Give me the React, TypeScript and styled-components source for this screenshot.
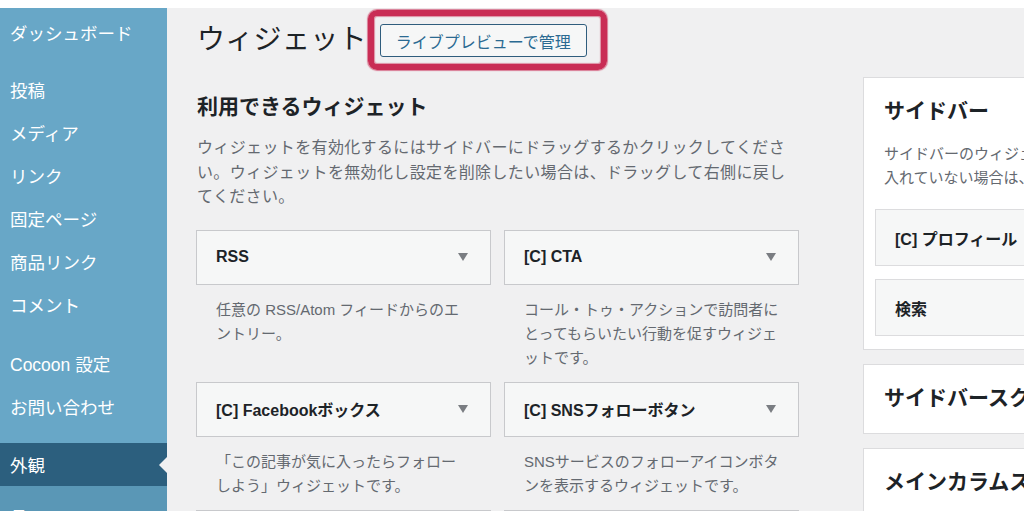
import styled, { createGlobalStyle } from "styled-components";

const GlobalStyle = createGlobalStyle`
  body {
    margin: 0;
    background: #ffffff;
    font-family: "Liberation Sans", "Noto Sans CJK JP", sans-serif;
  }
`;

const Page = styled.div`
  display: flex;
  margin-top: 8px;
  height: 503px;
  overflow: hidden;
`;

const AdminMenu = styled.nav`
  width: 167px;
  flex-shrink: 0;
  background: #68a7c7;
  padding-top: 3px;
  display: flex;
  flex-direction: column;
`;

const MenuItem = styled.div<{ gapBefore?: number; active?: boolean }>`
  position: relative;
  flex-shrink: 0;
  height: 43px;
  margin-top: ${props => props.gapBefore || 0}px;
  padding-left: 10px;
  display: flex;
  align-items: center;
  color: #ffffff;
  font-size: 17.5px;
  background: ${props => props.active ? "#2c5f7e" : "transparent"};

  ${props => props.active && `
    &::after {
      content: "";
      position: absolute;
      right: 0;
      top: 50%;
      margin-top: -8px;
      border: 8px solid transparent;
      border-right-color: #f0f0f1;
    }
  `}
`;

const SubMenu = styled.div`
  flex: 1;
  background: #5a97b6;
  padding: 17px 0 0 10px;
  color: #ffffff;
  font-size: 17.5px;
`;

const Main = styled.main`
  flex: 1;
  background: #f0f0f1;
  display: flex;
  padding-left: 29px;
  min-width: 0;
`;

const LeftCol = styled.div`
  width: 603px;
  flex-shrink: 0;
`;

const TitleRow = styled.div`
  display: flex;
  align-items: center;
  margin-top: 2px;
  height: 60px;
`;

const PageTitle = styled.h1`
  margin: 0 1px 0 1px;
  font-size: 28px;
  font-weight: normal;
  line-height: 1;
  color: #1d2327;
  letter-spacing: 0.3px;
`;

const Marker = styled.span`
  display: inline-flex;
  padding: 8px 14px 7px 6px;
  border: 6px solid #c92d55;
  border-radius: 9px;
  box-shadow: 0 0 1px 1px rgba(201, 45, 85, 0.6), inset 0 0 1px 1px rgba(201, 45, 85, 0.5);
`;

const ActionButton = styled.button`
  height: 33px;
  padding: 0 15px;
  border: 1px solid #2f5d7d;
  border-radius: 3px;
  background: #f6f7f7;
  color: #2a6a92;
  font-family: inherit;
  font-size: 16px;
`;

const SectionHeading = styled.h2`
  margin: 22px 0 0 1px;
  font-size: 21px;
  line-height: 30px;
  font-weight: bold;
  color: #1d2327;
`;

const Intro = styled.p`
  margin: 14px 0 0 1px;
  font-size: 16px;
  line-height: 24.5px;
  letter-spacing: 0.36px;
  color: #646970;
  white-space: pre-line;
`;

const WidgetGrid = styled.div`
  margin-top: 20px;
  display: grid;
  grid-template-columns: 295px 295px;
  column-gap: 13px;
  row-gap: 12px;
`;

const WidgetCell = styled.div``;

const WidgetBar = styled.div`
  height: 55px;
  box-sizing: border-box;
  border: 1px solid #c8c9cc;
  background: #f6f7f7;
  display: flex;
  align-items: center;
  justify-content: space-between;
  padding: 0 22px 0 19px;
  font-size: 16px;
  font-weight: bold;
  color: #1d2327;
`;

const Arrow = styled.span`
  width: 0;
  height: 0;
  border-left: 5px solid transparent;
  border-right: 5px solid transparent;
  border-top: 8px solid #7a7d82;
`;

const WidgetDesc = styled.p`
  margin: 13px 0 0;
  padding: 0 20px;
  font-size: 15px;
  line-height: 24px;
  color: #646970;
  white-space: pre-line;
`;

const RightCol = styled.div`
  margin-left: 64px;
  width: 320px;
  flex-shrink: 0;
  padding-top: 69px;
  display: flex;
  flex-direction: column;
  gap: 14px;
`;

const AreaPanel = styled.section<{ open?: boolean }>`
  background: #ffffff;
  border: 1px solid #dcdcde;
  border-right: none;
  padding: 18px 0 ${props => props.open ? "13px" : "20px"} 0;
`;

const AreaTitle = styled.h3`
  margin: 0 0 0 20px;
  font-size: 21px;
  line-height: 30px;
  font-weight: bold;
  color: #1d2327;
  white-space: nowrap;
`;

const AreaDesc = styled.p`
  margin: 16px 0 0 20px;
  font-size: 15px;
  line-height: 24px;
  color: #646970;
  white-space: nowrap;
`;

const AreaWidgets = styled.div`
  margin: 19px 0 0 11px;
  display: flex;
  flex-direction: column;
  gap: 13px;
`;

const AreaWidget = styled.div`
  height: 57px;
  box-sizing: border-box;
  border: 1px solid #dcdcde;
  border-right: none;
  background: #f6f7f7;
  display: flex;
  align-items: center;
  padding-left: 19px;
  font-size: 16px;
  font-weight: bold;
  color: #1d2327;
`;

const menu = [
  { label: "ダッシュボード", gap: 0 },
  { label: "投稿", gap: 14 },
  { label: "メディア" },
  { label: "リンク" },
  { label: "固定ページ" },
  { label: "商品リンク" },
  { label: "コメント" },
  { label: "Cocoon 設定", gap: 16 },
  { label: "お問い合わせ" },
  { label: "外観", gap: 15, active: true },
];

const intro =
  "ウィジェットを有効化するにはサイドバーにドラッグするかクリックしてくださ\n" +
  "い。ウィジェットを無効化し設定を削除したい場合は、ドラッグして右側に戻し\n" +
  "てください。";

const widgets = [
  { name: "RSS", desc: "任意の RSS/Atom フィードからのエ\nントリー。" },
  { name: "[C] CTA", desc: "コール・トゥ・アクションで訪問者に\nとってもらいたい行動を促すウィジェ\nットです。" },
  { name: "[C] Facebookボックス", desc: "「この記事が気に入ったらフォロー\nしよう」ウィジェットです。" },
  { name: "[C] SNSフォローボタン", desc: "SNSサービスのフォローアイコンボタ\nンを表示するウィジェットです。" },
  { name: "[C] おすすめカード", desc: "おすすめカードを表示するウィジェ\nットです。" },
  { name: "[C] ナビカード", desc: "ナビカードを表示するウィジェット\nです。" },
];

function App() {
  return (
    <>
      <GlobalStyle />
      <Page>
        <AdminMenu>
          {menu.map(item => (
            <MenuItem key={item.label} gapBefore={item.gap} active={item.active}>
              {item.label}
            </MenuItem>
          ))}
          <SubMenu>テーマ</SubMenu>
        </AdminMenu>

        <Main>
          <LeftCol>
            <TitleRow>
              <PageTitle>ウィジェット</PageTitle>
              <Marker>
                <ActionButton>ライブプレビューで管理</ActionButton>
              </Marker>
            </TitleRow>

            <SectionHeading>利用できるウィジェット</SectionHeading>
            <Intro>{intro}</Intro>

            <WidgetGrid>
              {widgets.map(w => (
                <WidgetCell key={w.name}>
                  <WidgetBar>
                    <span>{w.name}</span>
                    <Arrow />
                  </WidgetBar>
                  <WidgetDesc>{w.desc}</WidgetDesc>
                </WidgetCell>
              ))}
            </WidgetGrid>
          </LeftCol>

          <RightCol>
            <AreaPanel open>
              <AreaTitle>サイドバー</AreaTitle>
              <AreaDesc>
                サイドバーのウィジェットエリアです。ウィジェットを
                <br />
                入れていない場合は、メインカラムが全幅表示されます。
              </AreaDesc>
              <AreaWidgets>
                <AreaWidget>[C] プロフィール</AreaWidget>
                <AreaWidget>検索</AreaWidget>
              </AreaWidgets>
            </AreaPanel>
            <AreaPanel>
              <AreaTitle>サイドバースクロール追従</AreaTitle>
            </AreaPanel>
            <AreaPanel>
              <AreaTitle>メインカラムスクロール追従</AreaTitle>
            </AreaPanel>
          </RightCol>
        </Main>
      </Page>
    </>
  );
}

export default App;
